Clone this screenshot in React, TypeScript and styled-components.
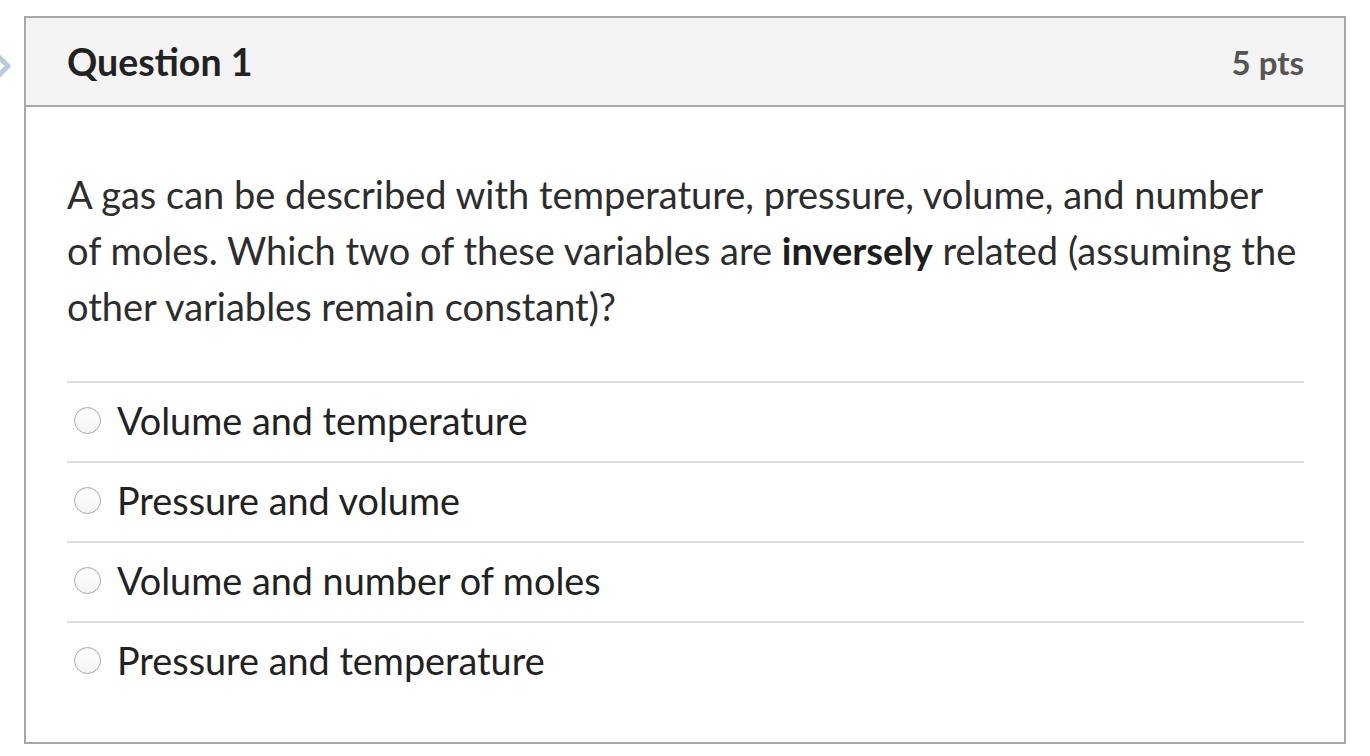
import styled, { createGlobalStyle } from 'styled-components'

const GlobalStyle = createGlobalStyle`
    html, body {
        margin: 0;
        padding: 0;
        background: #fff;
        font-family: Lato, "Open Sans", sans-serif;
    }
`

const Page = styled.div`
    display: flex;
    align-items: flex-start;
    padding-top: 16px;
`

const Gutter = styled.div`
    width: 24px;
    height: 100px;
    flex-shrink: 0;
    overflow: hidden;
    position: relative;

    svg {
        position: absolute;
        left: -14px;
        top: 30px;
    }
`

const Card = styled.div`
    width: 1322px;
    height: 728px;
    flex-shrink: 0;
    box-sizing: border-box;
    border: 2px solid #a8a8a8;
    display: flex;
    flex-direction: column;
`

const Header = styled.div`
    height: 89px;
    flex-shrink: 0;
    box-sizing: border-box;
    background: #f4f4f4;
    border-bottom: 2px solid #a8a8a8;
    display: flex;
    align-items: center;
    justify-content: space-between;
    padding: 0 40px 0 41px;
`

const Title = styled.h2`
    margin: 0;
    font-size: 37.5px;
    font-weight: 700;
    color: #222;
`

const Points = styled.div`
    font-size: 33px;
    font-weight: 700;
    color: #555;
`

const Body = styled.div`
    padding: 59px 40px 0 41px;
`

const QuestionText = styled.p`
    margin: 0 0 47px;
    max-width: 1231px;
    font-size: 38px;
    line-height: 56px;
    color: #2d2d2d;

    strong {
        font-weight: 700;
        color: #1d1d1d;
    }
`

const AnswerList = styled.div`
    display: flex;
    flex-direction: column;
`

const Answer = styled.label`
    display: flex;
    align-items: center;
    height: 80px;
    border-top: 2px solid #dedede;
    padding-left: 7px;
    padding-bottom: 4px;
    box-sizing: border-box;
    font-size: 37.8px;
    color: #222;
`

const Radio = styled.span`
    width: 27px;
    height: 27px;
    border-radius: 50%;
    box-sizing: border-box;
    border: 1.5px solid #aaa;
    background: linear-gradient(#fff, #f4f4f4);
    box-shadow: inset 0 1px 1px rgba(0, 0, 0, 0.06);
    margin-right: 16px;
    flex-shrink: 0;
`

const answers = [
    'Volume and temperature',
    'Pressure and volume',
    'Volume and number of moles',
    'Pressure and temperature',
]

const App = () => {
    return (
        <>
            <GlobalStyle />
            <Page>
                <Gutter>
                    <svg width="30" height="40" viewBox="0 0 30 40">
                        <path d="M8 6 L22 20 L8 34" fill="none" stroke="#b6cbdc" strokeWidth="5" strokeLinejoin="round" />
                    </svg>
                </Gutter>
                <Card>
                    <Header>
                        <Title>Question 1</Title>
                        <Points>5 pts</Points>
                    </Header>
                    <Body>
                        <QuestionText>
                            A gas can be described with temperature, pressure, volume, and number of moles. Which two of these variables are <strong>inversely</strong> related (assuming the other variables remain constant)?
                        </QuestionText>
                        <AnswerList>
                            {answers.map((a) => (
                                <Answer key={a}>
                                    <Radio />
                                    {a}
                                </Answer>
                            ))}
                        </AnswerList>
                    </Body>
                </Card>
            </Page>
        </>
    )
}

export default App
